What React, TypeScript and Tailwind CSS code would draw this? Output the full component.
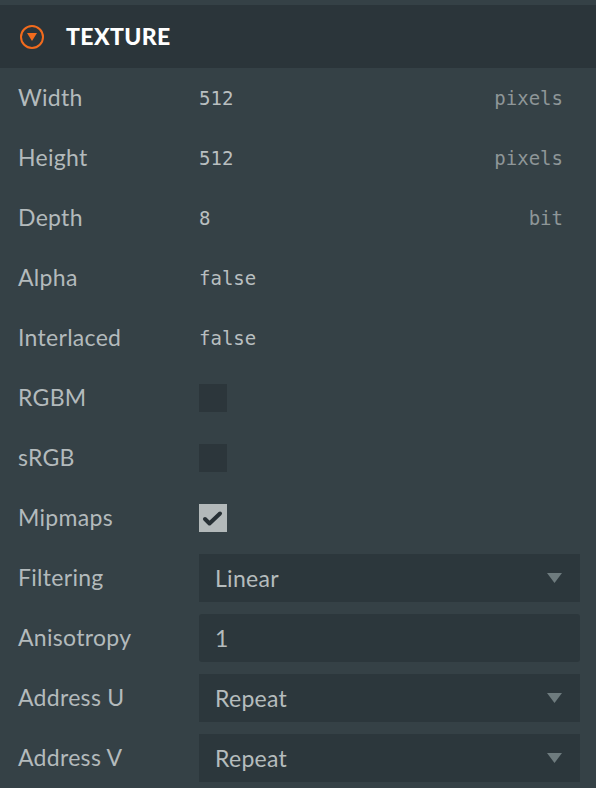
type Row =
  | { label: string; kind: "text"; value: string; unit?: string }
  | { label: string; kind: "check"; checked: boolean }
  | { label: string; kind: "select"; value: string }
  | { label: string; kind: "input"; value: string };

const rows: Row[] = [
  { label: "Width", kind: "text", value: "512", unit: "pixels" },
  { label: "Height", kind: "text", value: "512", unit: "pixels" },
  { label: "Depth", kind: "text", value: "8", unit: "bit" },
  { label: "Alpha", kind: "text", value: "false" },
  { label: "Interlaced", kind: "text", value: "false" },
  { label: "RGBM", kind: "check", checked: false },
  { label: "sRGB", kind: "check", checked: false },
  { label: "Mipmaps", kind: "check", checked: true },
  { label: "Filtering", kind: "select", value: "Linear" },
  { label: "Anisotropy", kind: "input", value: "1" },
  { label: "Address U", kind: "select", value: "Repeat" },
  { label: "Address V", kind: "select", value: "Repeat" },
];

function Field({ row }: { row: Row }) {
  if (row.kind === "text") {
    return (
      <div className="flex flex-1 items-center justify-between pr-[33px] font-['DejaVu_Sans_Mono',monospace] text-[19px] tracking-normal">
        <span className="text-[#b9bfc0]">{row.value}</span>
        {row.unit && <span className="text-[#8e9698]">{row.unit}</span>}
      </div>
    );
  }
  if (row.kind === "check") {
    return row.checked ? (
      <div className="flex h-7 w-7 items-center justify-center bg-[#b3b9ba]">
        <svg width="28" height="28" viewBox="0 0 28 28">
          <path d="M6 15 L10.5 19.5 L21 9.5" fill="none" stroke="#273035" strokeWidth="4" strokeLinecap="round" strokeLinejoin="round" />
        </svg>
      </div>
    ) : (
      <div className="h-7 w-7 bg-[#2c363b]" />
    );
  }
  if (row.kind === "select") {
    return (
      <div className="mr-4 flex h-12 flex-1 items-center justify-between bg-[#2c373c] pl-4 pr-[18px] text-[#b5bcbd]">
        <span>{row.value}</span>
        <svg width="15" height="10" viewBox="0 0 15 10">
          <path d="M0 0 H15 L7.5 10 Z" fill="#6e7b7e" />
        </svg>
      </div>
    );
  }
  return (
    <div className="mr-4 flex h-12 flex-1 items-center rounded-[3px] bg-[#2c373c] pl-4 text-[#b5bcbd]">
      {row.value}
    </div>
  );
}

export default function App() {
  return (
    <div className="min-h-screen bg-[#354146] pt-[5px] font-['Lato',sans-serif]">
      {/* Header */}
      <div className="flex h-[63px] items-center bg-[#2b353a]">
        <div className="ml-[20px] flex h-[24px] w-[24px] items-center justify-center rounded-full border-2 border-[#f26b1d]">
          <svg width="10" height="8" viewBox="0 0 10 8">
            <path d="M0 0 H10 L5 8 Z" fill="#f26b1d" />
          </svg>
        </div>
        <span className="ml-[22px] text-[23px] font-black tracking-[0.4px] text-white">TEXTURE</span>
      </div>

      {/* Rows */}
      <div>
        {rows.map((row) => (
          <div key={row.label} className="flex h-[60px] items-center text-[23px] tracking-[0.3px]">
            <span className="w-[199px] shrink-0 pb-[2px] pl-[18px] text-[#b3babc]">{row.label}</span>
            <Field row={row} />
          </div>
        ))}
      </div>
    </div>
  );
}
